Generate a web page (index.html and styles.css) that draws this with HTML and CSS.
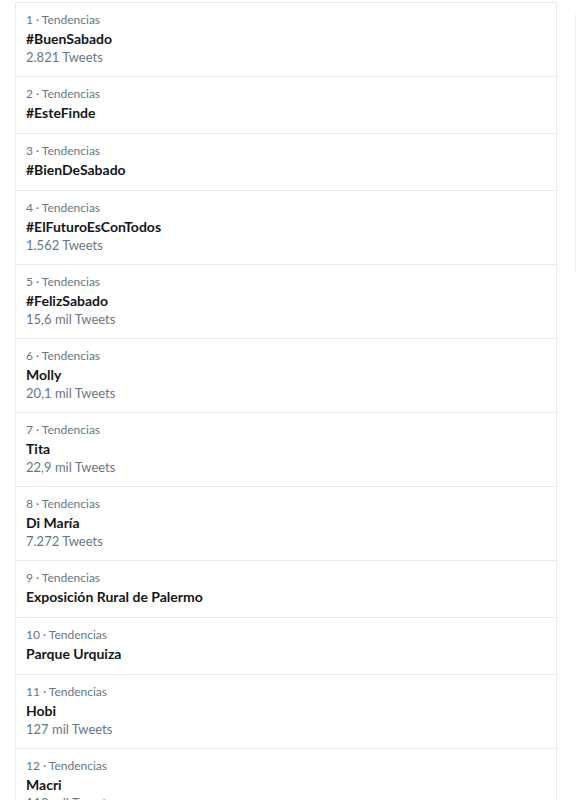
FILE: index.html
```html
<!DOCTYPE html>
<html lang="es">
<head>
<meta charset="utf-8">
<title>Tendencias</title>
<link rel="stylesheet" href="styles.css">
</head>
<body>
<div class="scroll-line"></div>
<section class="trends">
  <div class="trend"><div class="meta">1 · Tendencias</div><div class="name">#BuenSabado</div><div class="count">2.821 Tweets</div></div>
  <div class="trend"><div class="meta">2 · Tendencias</div><div class="name">#EsteFinde</div></div>
  <div class="trend"><div class="meta">3 · Tendencias</div><div class="name">#BienDeSabado</div></div>
  <div class="trend"><div class="meta">4 · Tendencias</div><div class="name">#ElFuturoEsConTodos</div><div class="count">1.562 Tweets</div></div>
  <div class="trend"><div class="meta">5 · Tendencias</div><div class="name">#FelizSabado</div><div class="count">15,6 mil Tweets</div></div>
  <div class="trend"><div class="meta">6 · Tendencias</div><div class="name">Molly</div><div class="count">20,1 mil Tweets</div></div>
  <div class="trend"><div class="meta">7 · Tendencias</div><div class="name">Tita</div><div class="count">22,9 mil Tweets</div></div>
  <div class="trend"><div class="meta">8 · Tendencias</div><div class="name">Di María</div><div class="count">7.272 Tweets</div></div>
  <div class="trend"><div class="meta">9 · Tendencias</div><div class="name">Exposición Rural de Palermo</div></div>
  <div class="trend"><div class="meta">10 · Tendencias</div><div class="name">Parque Urquiza</div></div>
  <div class="trend"><div class="meta">11 · Tendencias</div><div class="name">Hobi</div><div class="count">127 mil Tweets</div></div>
  <div class="trend"><div class="meta">12 · Tendencias</div><div class="name">Macri</div><div class="count">110 mil Tweets</div></div>
</section>
</body>
</html>
```
FILE: styles.css
```css
html, body {
  margin: 0;
  padding: 0;
  background: #ffffff;
}
body {
  font-family: "Lato", "Open Sans", sans-serif;
  color: #14171a;
  overflow: hidden;
  height: 800px;
}
.scroll-line {
  position: absolute;
  left: 575px;
  top: 14px;
  width: 1px;
  height: 258px;
  background: #eef0f2;
}
.trends {
  margin: 2px 0 0 15px;
  width: 542px;
  box-sizing: border-box;
  border-left: 1px solid #e6ecf0;
  border-right: 1px solid #e6ecf0;
}
.trend {
  border-top: 1px solid #e6ecf0;
  padding: 8px 10px 10px 10px;
}
.meta {
  font-size: 12px;
  line-height: 18px;
  color: #657786;
}
.name {
  font-size: 14px;
  line-height: 20px;
  font-weight: 700;
  color: #14171a;
}
.count {
  font-size: 13px;
  line-height: 17px;
  color: #657786;
}
```
